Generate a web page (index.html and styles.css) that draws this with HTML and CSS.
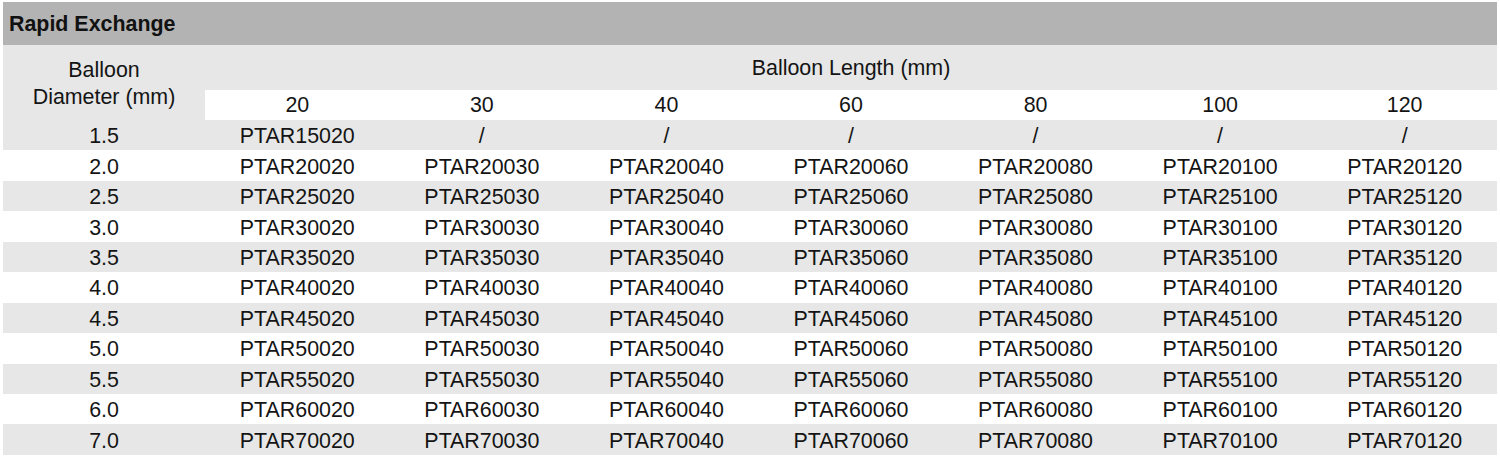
FILE: index.html
```html
<!DOCTYPE html>
<html>
<head>
<meta charset="utf-8">
<link rel="stylesheet" href="styles.css">
</head>
<body>
<div class="sheet">
  <div class="title">Rapid Exchange</div>
  <table class="grid">
    <colgroup>
      <col class="c-dia">
      <col><col><col><col><col><col><col>
    </colgroup>
    <thead>
      <tr class="h1">
        <th rowspan="2" class="dia-head">Balloon<br>Diameter (mm)</th>
        <th colspan="7" class="len-head">Balloon Length (mm)</th>
      </tr>
      <tr class="h2">
        <th>20</th><th>30</th><th>40</th><th>60</th><th>80</th><th>100</th><th>120</th>
      </tr>
    </thead>
    <tbody>
      <tr class="alt"><td>1.5</td><td>PTAR15020</td><td>/</td><td>/</td><td>/</td><td>/</td><td>/</td><td>/</td></tr>
      <tr><td>2.0</td><td>PTAR20020</td><td>PTAR20030</td><td>PTAR20040</td><td>PTAR20060</td><td>PTAR20080</td><td>PTAR20100</td><td>PTAR20120</td></tr>
      <tr class="alt"><td>2.5</td><td>PTAR25020</td><td>PTAR25030</td><td>PTAR25040</td><td>PTAR25060</td><td>PTAR25080</td><td>PTAR25100</td><td>PTAR25120</td></tr>
      <tr><td>3.0</td><td>PTAR30020</td><td>PTAR30030</td><td>PTAR30040</td><td>PTAR30060</td><td>PTAR30080</td><td>PTAR30100</td><td>PTAR30120</td></tr>
      <tr class="alt"><td>3.5</td><td>PTAR35020</td><td>PTAR35030</td><td>PTAR35040</td><td>PTAR35060</td><td>PTAR35080</td><td>PTAR35100</td><td>PTAR35120</td></tr>
      <tr><td>4.0</td><td>PTAR40020</td><td>PTAR40030</td><td>PTAR40040</td><td>PTAR40060</td><td>PTAR40080</td><td>PTAR40100</td><td>PTAR40120</td></tr>
      <tr class="alt"><td>4.5</td><td>PTAR45020</td><td>PTAR45030</td><td>PTAR45040</td><td>PTAR45060</td><td>PTAR45080</td><td>PTAR45100</td><td>PTAR45120</td></tr>
      <tr><td>5.0</td><td>PTAR50020</td><td>PTAR50030</td><td>PTAR50040</td><td>PTAR50060</td><td>PTAR50080</td><td>PTAR50100</td><td>PTAR50120</td></tr>
      <tr class="alt"><td>5.5</td><td>PTAR55020</td><td>PTAR55030</td><td>PTAR55040</td><td>PTAR55060</td><td>PTAR55080</td><td>PTAR55100</td><td>PTAR55120</td></tr>
      <tr><td>6.0</td><td>PTAR60020</td><td>PTAR60030</td><td>PTAR60040</td><td>PTAR60060</td><td>PTAR60080</td><td>PTAR60100</td><td>PTAR60120</td></tr>
      <tr class="alt"><td>7.0</td><td>PTAR70020</td><td>PTAR70030</td><td>PTAR70040</td><td>PTAR70060</td><td>PTAR70080</td><td>PTAR70100</td><td>PTAR70120</td></tr>
    </tbody>
  </table>
</div>
</body>
</html>
```
FILE: styles.css
```css
html, body {
  margin: 0;
  padding: 0;
  background: #ffffff;
}

body {
  padding: 2px 3px 0 3px;
  font-family: "Liberation Sans", Arial, sans-serif;
  color: #141414;
}

.sheet {
  width: 1494px;
}

.title {
  height: 41px;
  line-height: 41px;
  padding-top: 2px;
  background: #b3b3b3;
  padding-left: 6px;
  font-weight: bold;
  font-size: 21.4px;
  color: #111111;
}

.grid {
  width: 1494px;
  border-collapse: collapse;
  border-spacing: 0;
  table-layout: fixed;
  font-size: 21.4px;
}

.c-dia {
  width: 202px;
}

.grid th,
.grid td {
  padding: 0;
  text-align: center;
  font-weight: normal;
  white-space: nowrap;
}

.h1 th {
  height: 43px;
  background: #e6e7e6;
  line-height: 27px;
  padding-top: 2px;
}

.dia-head {
  vertical-align: middle;
}

.h2 th {
  height: 29px;
  padding-top: 1px;
  background: #ffffff;
  line-height: 29px;
}

.grid tbody tr {
  height: 30.45px;
}

.grid tbody td {
  line-height: 24px;
  padding-top: 2px;
}

.grid tbody tr.alt td {
  background: #e6e7e6;
}
```
